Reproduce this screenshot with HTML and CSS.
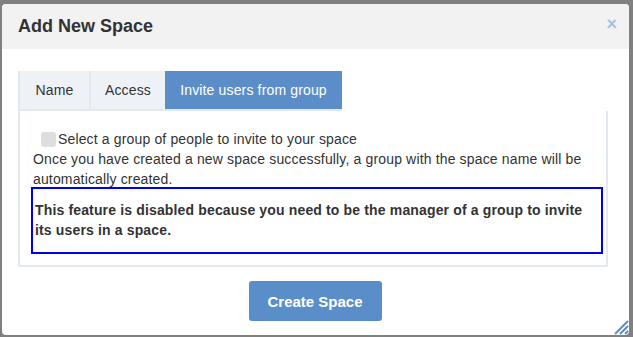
FILE: index.html
```html
<!DOCTYPE html>
<html>
<head>
<meta charset="utf-8">
<link rel="stylesheet" href="styles.css">
</head>
<body>
<div class="overlay">
  <div class="dialog">
    <div class="header">
      <h1 class="title">Add New Space</h1>
      <span class="close">×</span>
    </div>
    <div class="body">
      <div class="tabs">
        <div class="tab tab-name">Name</div>
        <div class="tab tab-access">Access</div>
        <div class="tab active">Invite users from group</div>
      </div>
      <div class="panel">
        <label class="check"><span class="box"></span>Select a group of people to invite to your space</label>
        <p class="info">Once you have created a new space successfully, a group with the space name will be automatically created.</p>
        <div class="notice">This feature is disabled because you need to be the manager of a group to invite its users in a space.</div>
      </div>
      <div class="footer">
        <button class="btn">Create Space</button>
      </div>
    </div>
    <svg class="grip" width="20" height="20" viewBox="0 0 20 20">
      <path d="M19 6 L6 19 M19 11 L11 19 M19 16 L16 19" stroke="#5a8ec8" stroke-width="2"/>
    </svg>
  </div>
</div>
</body>
</html>
```
FILE: styles.css
```css
html, body {
  margin: 0;
  padding: 0;
}
body {
  width: 633px;
  height: 337px;
  overflow: hidden;
  background: #808080;
  font-family: "Liberation Sans", Arial, sans-serif;
  color: #333;
}
.overlay {
  padding: 4px 4px 0 2px;
}
.dialog {
  position: relative;
  background: #fff;
  border-radius: 4px;
  height: 331px;
  overflow: hidden;
}
.header {
  background: #f2f2f2;
  height: 45px;
  display: flex;
  align-items: center;
  justify-content: space-between;
  padding: 0 12px 0 16px;
}
.title {
  margin: 0;
  font-size: 18px;
  font-weight: bold;
  color: #333;
}
.close {
  color: #a9c1df;
  font-size: 18px;
  font-weight: bold;
  margin-top: -4px;
}
.body {
  padding: 22px 21px 0 16px;
}
.tabs {
  display: flex;
  background: #eef2f6;
  width: 324px;
  border-bottom: 2px solid #e2e9f0;
}
.tab {
  height: 38px;
  display: flex;
  align-items: center;
  justify-content: center;
  font-size: 14px;
  letter-spacing: 0.15px;
  color: #333;
  border-left: 2px solid #e2e9f0;
  box-sizing: border-box;
}
.tab-name {
  width: 71px;
}
.tab-access {
  width: 76px;
}
.tab.active {
  background: #5b8ec9;
  color: #fff;
  border-left: none;
  flex: 1;
}
.panel {
  border: 2px solid #e2e9f0;
  border-top: none;
  padding: 18px 3px 10px 13px;
  font-size: 14px;
  letter-spacing: 0.15px;
  line-height: 20px;
  height: 126px;
}
.check {
  display: flex;
  align-items: center;
  padding-left: 8px;
}
.box {
  width: 15px;
  height: 15px;
  background: #dedede;
  border-radius: 3px;
  margin-right: 2px;
}
.info {
  margin: 0;
}
.notice {
  margin: -2px 0 0 -2px;
  border: 2px solid #0000f0;
  font-weight: bold;
  padding: 11px 2px 12px 2px;
}
.footer {
  display: flex;
  justify-content: center;
  padding: 14px 0 0 0;
}
.btn {
  background: #5a8ec8;
  color: #fff;
  border: none;
  border-radius: 3px;
  font-family: "Liberation Sans", Arial, sans-serif;
  font-size: 15px;
  font-weight: bold;
  width: 133px;
  height: 40px;
  margin-left: 4px;
}
.grip {
  position: absolute;
  right: 0;
  bottom: 0;
}
```
